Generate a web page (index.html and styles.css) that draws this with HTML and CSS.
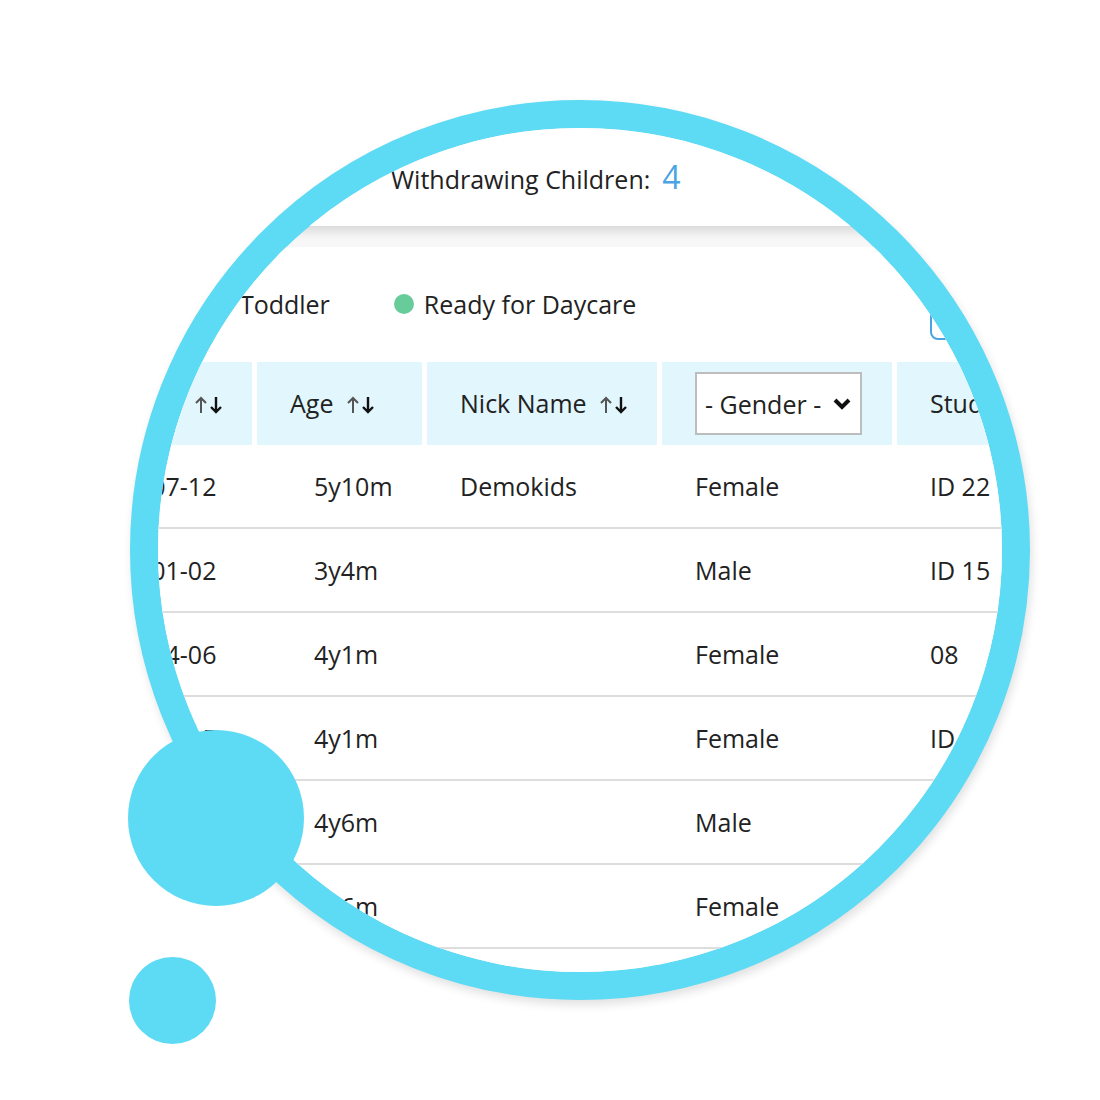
FILE: index.html
```html
<!DOCTYPE html>
<html>
<head>
    <title>Children List</title>
    <meta charset="UTF-8">
    <link rel="stylesheet" href="styles.css">
</head>
<body>
    <div class="lens">
        <div class="screen">
            <div class="stats-card">
                <div class="stat">
                    <span class="stat-label">Withdrawing Children:</span>
                    <span class="stat-num">4</span>
                </div>
            </div>

            <div class="panel">
                <div class="toolbar">
                    <div class="legend">
                        <div class="legend-item"><span class="dot dot-infant"></span>Infant</div>
                        <div class="legend-item"><span class="dot dot-toddler"></span>Toddler</div>
                        <div class="legend-item"><span class="dot dot-ready"></span>Ready for Daycare</div>
                    </div>
                    <div class="search"></div>
                </div>

                <table>
                    <colgroup>
                        <col class="c-birth">
                        <col class="c-age">
                        <col class="c-nick">
                        <col class="c-gender">
                        <col>
                    </colgroup>
                    <thead>
                        <tr>
                            <th class="birth">Birthday <svg class="sort" viewBox="0 0 30 20"><path d="M6 18V3M1 8l5-5 5 5" stroke="#555" stroke-width="2" fill="none"/><path d="M21 2v15M16 12l5 5 5-5" stroke="#111" stroke-width="2.4" fill="none"/></svg></th>
                            <th>Age <svg class="sort" viewBox="0 0 30 20"><path d="M6 18V3M1 8l5-5 5 5" stroke="#555" stroke-width="2" fill="none"/><path d="M21 2v15M16 12l5 5 5-5" stroke="#111" stroke-width="2.4" fill="none"/></svg></th>
                            <th>Nick Name <svg class="sort" viewBox="0 0 30 20"><path d="M6 18V3M1 8l5-5 5 5" stroke="#555" stroke-width="2" fill="none"/><path d="M21 2v15M16 12l5 5 5-5" stroke="#111" stroke-width="2.4" fill="none"/></svg></th>
                            <th>
                                <div class="select">
                                    <span>- Gender -</span>
                                    <svg class="chevron" viewBox="0 0 20 20"><path d="M3 6l7 7 7-7" stroke="#111" stroke-width="4" fill="none"/></svg>
                                </div>
                            </th>
                            <th>Student ID</th>
                        </tr>
                    </thead>
                    <tbody>
                        <tr><td class="birth">2018-07-12</td><td class="age">5y10m</td><td>Demokids</td><td>Female</td><td>ID 22</td></tr>
                        <tr><td class="birth">2021-01-02</td><td class="age">3y4m</td><td></td><td>Male</td><td>ID 15</td></tr>
                        <tr><td class="birth">2020-04-06</td><td class="age">4y1m</td><td></td><td>Female</td><td>08</td></tr>
                        <tr><td class="birth">2020-04-05</td><td class="age">4y1m</td><td></td><td>Female</td><td>ID 09</td></tr>
                        <tr><td class="birth">2019-11-20</td><td class="age">4y6m</td><td></td><td>Male</td><td>ID 11</td></tr>
                        <tr><td class="birth">2019-11-18</td><td class="age">4y6m</td><td></td><td>Female</td><td>ID 12</td></tr>
                        <tr><td class="birth">2019-09-03</td><td class="age">4y8m</td><td></td><td>Male</td><td>ID 13</td></tr>
                    </tbody>
                </table>
            </div>
        </div>
    </div>

    <div class="bubble bubble-lg"></div>
    <div class="bubble bubble-sm"></div>
</body>
</html>
```

FILE: styles.css
```css
body {
    margin: 0;
    background-color: #fff;
    font-family: "Open Sans", "Noto Sans", sans-serif;
    color: #222;
}
.lens {
    position: absolute;
    left: 130px;
    top: 100px;
    width: 900px;
    height: 900px;
    box-sizing: border-box;
    border: 28px solid #5ddaf4;
    border-radius: 50%;
    overflow: hidden;
    background-color: #f7f7f7;
    box-shadow: 2px 5px 10px rgba(0,0,0,0.12);
}
.screen {
    margin-left: -115px;
    width: 1160px;
    font-size: 25px;
}
.stats-card {
    height: 98px;
    box-sizing: border-box;
    padding: 2px 0 0 348px;
    background-color: #fff;
    box-shadow: 0 5px 10px rgba(0,0,0,0.13);
    display: flex;
    align-items: center;
}
.stat {
    display: flex;
    align-items: baseline;
    gap: 12px;
    line-height: 34px;
}
.stat-num {
    font-size: 32px;
    color: #4ba3e3;
}
.panel {
    margin-top: 21px;
    padding-top: 27px;
    background-color: #fff;
}
.toolbar {
    display: flex;
    align-items: center;
    height: 66px;
    padding-right: 33px;
    margin-bottom: 22px;
}
.legend {
    display: flex;
    align-items: center;
    gap: 64px;
    padding-left: 4px;
    margin-bottom: 6px;
    line-height: 34px;
}
.legend-item {
    display: flex;
    align-items: center;
    gap: 10px;
}
.dot {
    width: 20px;
    height: 20px;
    border-radius: 50%;
}
.dot-infant { background-color: #f7b84b; }
.dot-toddler { background-color: #f39c5a; }
.dot-ready { background-color: #68cc9a; }
.search {
    margin-left: auto;
    width: 240px;
    height: 66px;
    box-sizing: border-box;
    border: 2px solid #4ba3e3;
    border-radius: 8px;
}
table {
    width: 100%;
    border-collapse: separate;
    border-spacing: 0;
    table-layout: fixed;
}
.c-birth { width: 214px; }
.c-age { width: 170px; }
.c-nick { width: 235px; }
.c-gender { width: 235px; }
th {
    background-color: #e1f6fd;
    border-right: 5px solid #fff;
    padding: 10px 0 10px 33px;
    text-align: left;
    font-weight: normal;
    line-height: 63px;
    white-space: nowrap;
}
th.birth {
    padding-left: 40px;
}
.sort {
    width: 30px;
    height: 20px;
    margin-left: 7px;
    vertical-align: -2px;
}
.select {
    width: 167px;
    height: 63px;
    box-sizing: border-box;
    border: 2px solid #bdbdbd;
    background-color: #fff;
    display: flex;
    align-items: center;
    justify-content: space-between;
    padding: 0 8px;
    line-height: 34px;
}
.chevron {
    width: 20px;
    height: 20px;
}
td {
    padding: 24px 0 24px 33px;
    line-height: 34px;
    border-bottom: 2px solid #ddd;
    white-space: nowrap;
}
td.birth {
    padding-left: 43px;
}
td.age {
    padding-left: 57px;
}
.bubble {
    position: absolute;
    border-radius: 50%;
    background-color: #5ddaf4;
}
.bubble-lg {
    left: 128px;
    top: 730px;
    width: 176px;
    height: 176px;
}
.bubble-sm {
    left: 129px;
    top: 957px;
    width: 87px;
    height: 87px;
}
```
